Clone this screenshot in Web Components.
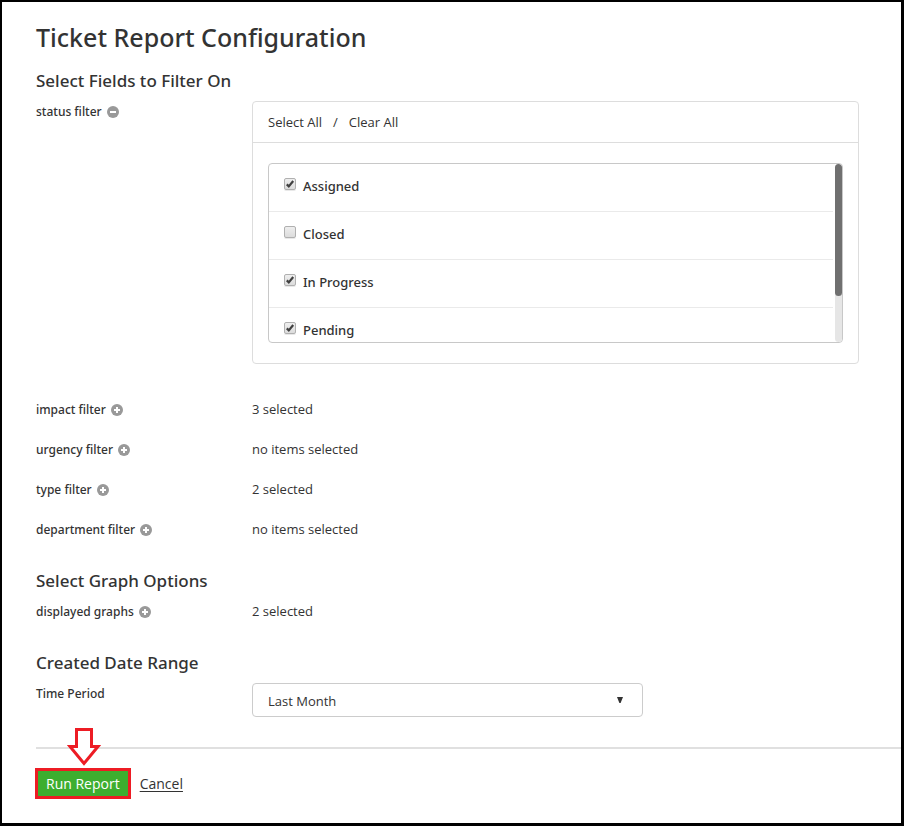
<!DOCTYPE html>
<html lang="en">
<head>
<meta charset="utf-8">
<meta name="viewport" content="width=device-width, initial-scale=1">
<title>Ticket Report Configuration</title>
<style>
  html, body { margin: 0; }
  body {
    background: #fff;
    color: #333;
    font: 13px/20px "Open Sans", "Noto Sans", sans-serif;
  }
</style>
</head>
<body>
<report-page>
  <span slot="title">Ticket Report Configuration</span>
  <report-section heading="Select Fields to Filter On">
    <filter-row label="status filter" open>
      <check-panel>
        <check-item label="Assigned" checked></check-item>
        <check-item label="Closed"></check-item>
        <check-item label="In Progress" checked></check-item>
        <check-item label="Pending" checked></check-item>
      </check-panel>
    </filter-row>
    <filter-row label="impact filter">3 selected</filter-row>
    <filter-row label="urgency filter">no items selected</filter-row>
    <filter-row label="type filter">2 selected</filter-row>
    <filter-row label="department filter">no items selected</filter-row>
  </report-section>
  <report-section heading="Select Graph Options">
    <filter-row label="displayed graphs">2 selected</filter-row>
  </report-section>
  <report-section heading="Created Date Range">
    <select-row label="Time Period" options="Last Month"></select-row>
  </report-section>
  <report-actions slot="footer"></report-actions>
</report-page>

<script>
const define = (name, render, setup) => customElements.define(name, class extends HTMLElement {
  connectedCallback() {
    if (this.shadowRoot) return;
    this.attachShadow({ mode: "open" }).innerHTML = render(this);
    if (setup) setup(this, this.shadowRoot);
  }
});

const rowStyle = `
  :host { display: grid; grid-template-columns: 216px minmax(0, 1fr); align-items: start; }
  .label { font-family: "Noto Sans", "Open Sans", sans-serif; font-weight: 500; font-size: 12px; line-height: 22px; }
`;

define("report-page", () => `
  <style>
    :host {
      display: flex; flex-direction: column; box-sizing: border-box; min-height: 100vh;
      border: solid #000; border-width: 2px 3px 3px 2px; padding: 19px 0 24px 34px;
    }
    h1 { margin: 0 0 14px; font-family: "Noto Sans", "Open Sans", sans-serif; font-size: 25px; line-height: 32px; font-weight: 500; }
    main { display: flex; flex-direction: column; gap: 26px; padding: 0 42px 30px 0; }
  </style>
  <h1><slot name="title"></slot></h1>
  <main><slot></slot></main>
  <slot name="footer"></slot>`);

define("report-section", el => `
  <style>
    :host { display: block; }
    h2 { margin: 0 0 6px; font-family: "Noto Sans", "Open Sans", sans-serif; font-size: 17px; line-height: 28px; font-weight: 500; }
    .rows { display: flex; flex-direction: column; gap: 18px; }
  </style>
  <section>
    <h2>${el.getAttribute("heading")}</h2>
    <div class="rows"><slot></slot></div>
  </section>`);

define("filter-row", el => `
  <style>
    ${rowStyle}
    :host([open]) { padding-bottom: 17px; }
    .name { display: flex; align-items: center; gap: 5px; }
    button { display: block; width: 12px; height: 12px; margin: 0; padding: 0; border: 0; background: none; cursor: pointer; }
    svg { display: block; width: 12px; height: 12px; }
  </style>
  <div class="name">
    <span class="label" id="name">${el.getAttribute("label")}</span>
    <button type="button" aria-labelledby="name" aria-expanded="${el.hasAttribute("open")}">
      <svg viewBox="0 0 12 12" aria-hidden="true">
        <circle cx="6" cy="6" r="6" fill="#999"/>
        <path d="${el.hasAttribute("open") ? "M3 6h6" : "M3 6h6M6 3v6"}" stroke="#fff" stroke-width="2"/>
      </svg>
    </button>
  </div>
  <div><slot></slot></div>`);

define("check-panel", () => `
  <style>
    :host { display: block; border: 1px solid #ddd; border-radius: 4px; }
    .bar { display: flex; gap: 11px; padding: 10px 15px; border-bottom: 1px solid #ddd; }
    .bar button { margin: 0; padding: 0; border: 0; background: none; color: inherit; font: inherit; cursor: pointer; }
    .body { padding: 20px 15px; }
    .frame { position: relative; border: 1px solid #c8c8c8; border-radius: 4px; overflow: hidden; }
    .list { height: 178px; padding-right: 9px; overflow: hidden; }
    .track { position: absolute; top: 0; right: 0; bottom: 0; width: 7px; border-radius: 4px; background: #e6e6e6; }
    .thumb { height: 74%; border-radius: 4px; background: #707070; }
  </style>
  <div class="bar">
    <button type="button" id="all">Select All</button><span>/</span><button type="button" id="none">Clear All</button>
  </div>
  <div class="body">
    <div class="frame">
      <div class="list"><slot></slot></div>
      <div class="track"><div class="thumb"></div></div>
    </div>
  </div>`,
  (el, root) => {
    const setAll = on => el.querySelectorAll("check-item").forEach(i => {
      i.shadowRoot.querySelector("input").checked = on;
    });
    root.getElementById("all").onclick = () => setAll(true);
    root.getElementById("none").onclick = () => setAll(false);
  });

define("check-item", el => `
  <style>
    :host { display: block; border-bottom: 1px solid #eaeaea; }
    label { display: flex; align-items: flex-start; gap: 7px; padding: 12px 15px 15px; font-weight: 500; font-family: "Noto Sans", "Open Sans", sans-serif; }
    input {
      appearance: none; box-sizing: border-box; flex: none; width: 12px; height: 12px; margin: 2px 0 0;
      border: 1px solid #b0b0b0; border-radius: 2px; background: linear-gradient(#eee, #dcdcdc);
      box-shadow: 0 1px 0 #e8e8e8;
    }
    input:checked {
      background: url("data:image/svg+xml,%3Csvg xmlns='http://www.w3.org/2000/svg' viewBox='0 0 10 10'%3E%3Cpath d='M1.8 5.4 3.8 7.4 8.2 2' fill='none' stroke='%23404040' stroke-width='2.2'/%3E%3C/svg%3E") center / 10px 10px no-repeat, linear-gradient(#eee, #dcdcdc);
    }
  </style>
  <label><input type="checkbox" ${el.hasAttribute("checked") ? "checked" : ""}>${el.getAttribute("label")}</label>`);

define("select-row", el => `
  <style>
    ${rowStyle}
    .field { display: grid; align-items: center; max-width: 391px; }
    select, svg { grid-area: 1 / 1; }
    select {
      appearance: none; box-sizing: border-box; width: 100%; height: 34px; margin: 0; padding: 1px 40px 0 15px;
      border: 1px solid #ccc; border-radius: 4px; background: #fff; color: inherit; font: inherit;
    }
    svg { justify-self: end; width: 6px; height: 6px; margin-right: 20px; pointer-events: none; }
  </style>
  <label class="label" for="choice">${el.getAttribute("label")}</label>
  <div class="field">
    <select id="choice">${el.getAttribute("options").split(",").map(o => `<option>${o}</option>`).join("")}</select>
    <svg viewBox="0 0 6 6" aria-hidden="true"><path d="M0 0h6L3.6 6H2.4z" fill="#333"/></svg>
  </div>`);

define("report-actions", () => `
  <style>
    :host { display: block; position: relative; border-top: 2px solid #e0e0e0; padding-top: 19px; }
    .actions { display: flex; align-items: center; gap: 9px; margin-left: -1px; }
    button {
      box-sizing: border-box; height: 31px; margin: 0; padding: 0 8px; border: 3px solid #ed1c24;
      background: #3dae2f; color: #fff; font: inherit; font-size: 14px; cursor: pointer;
    }
    a { color: inherit; font-size: 14px; text-underline-offset: 2px; }
    .pointer { position: absolute; left: 31px; top: -21px; width: 34px; height: 38px; }
  </style>
  <svg class="pointer" viewBox="0 0 34 38" aria-hidden="true">
    <path d="M9.500 1.500H24.500V18.500H31L17 35.500 3 18.500H9.500Z" fill="#fff" stroke="#ed1c24" stroke-width="3"/>
  </svg>
  <div class="actions"><button type="button">Run Report</button><a href="#">Cancel</a></div>`);
</script>
</body>
</html>
